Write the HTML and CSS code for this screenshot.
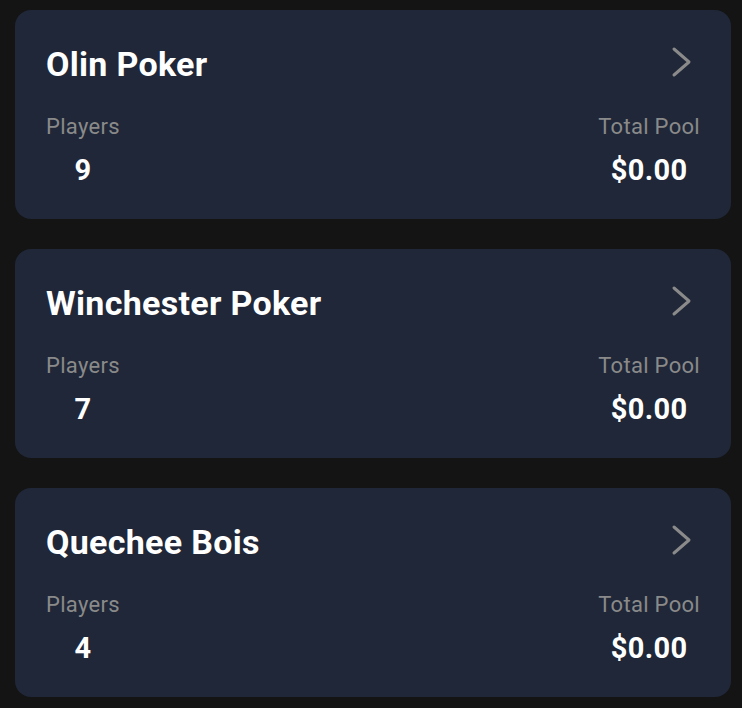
FILE: index.html
```html
<!DOCTYPE html>
<html lang="en">
<head>
<meta charset="utf-8">
<title>Games</title>
<link rel="stylesheet" href="styles.css">
</head>
<body>
<main class="list">
  <section class="card">
    <div class="card-head">
      <h2 class="title">Olin Poker</h2>
      <svg class="chevron" width="22" height="32" viewBox="0 0 22 32"><path d="M3 3 L18 16 L3 29" fill="none" stroke="currentColor" stroke-width="3" stroke-linecap="round" stroke-linejoin="round"/></svg>
    </div>
    <div class="stats">
      <div class="stat"><span class="label">Players</span><span class="value">9</span></div>
      <div class="stat"><span class="label">Total Pool</span><span class="value">$0.00</span></div>
    </div>
  </section>
  <section class="card">
    <div class="card-head">
      <h2 class="title">Winchester Poker</h2>
      <svg class="chevron" width="22" height="32" viewBox="0 0 22 32"><path d="M3 3 L18 16 L3 29" fill="none" stroke="currentColor" stroke-width="3" stroke-linecap="round" stroke-linejoin="round"/></svg>
    </div>
    <div class="stats">
      <div class="stat"><span class="label">Players</span><span class="value">7</span></div>
      <div class="stat"><span class="label">Total Pool</span><span class="value">$0.00</span></div>
    </div>
  </section>
  <section class="card">
    <div class="card-head">
      <h2 class="title">Quechee Bois</h2>
      <svg class="chevron" width="22" height="32" viewBox="0 0 22 32"><path d="M3 3 L18 16 L3 29" fill="none" stroke="currentColor" stroke-width="3" stroke-linecap="round" stroke-linejoin="round"/></svg>
    </div>
    <div class="stats">
      <div class="stat"><span class="label">Players</span><span class="value">4</span></div>
      <div class="stat"><span class="label">Total Pool</span><span class="value">$0.00</span></div>
    </div>
  </section>
</main>
</body>
</html>
```
FILE: styles.css
```css
html, body {
  margin: 0;
  background: #141414;
}
body {
  font-family: Roboto, "Liberation Sans", sans-serif;
  color: #ffffff;
}
.list {
  display: flex;
  flex-direction: column;
  gap: 30px;
  padding: 10px 11px 0 15px;
}
.card {
  background: #1f2738;
  border-radius: 16px;
  padding: 34px 31px 32px 31px;
}
.card-head {
  display: flex;
  justify-content: space-between;
  align-items: center;
  height: 40px;
}
.title {
  margin: 0;
  font-size: 34px;
  line-height: 40px;
  letter-spacing: 0.3px;
  font-weight: 700;
}
.chevron {
  color: #8a8a8a;
  margin-right: 7px;
  margin-top: -4px;
}
.stats {
  display: flex;
  justify-content: space-between;
  margin-top: 30px;
}
.stat {
  display: flex;
  flex-direction: column;
  align-items: center;
  gap: 15px;
}
.label {
  font-size: 22px;
  line-height: 25px;
  letter-spacing: 0.3px;
  color: #8a8a8a;
}
.value {
  font-size: 29px;
  line-height: 33px;
  letter-spacing: 0.4px;
  font-weight: 700;
}
```
